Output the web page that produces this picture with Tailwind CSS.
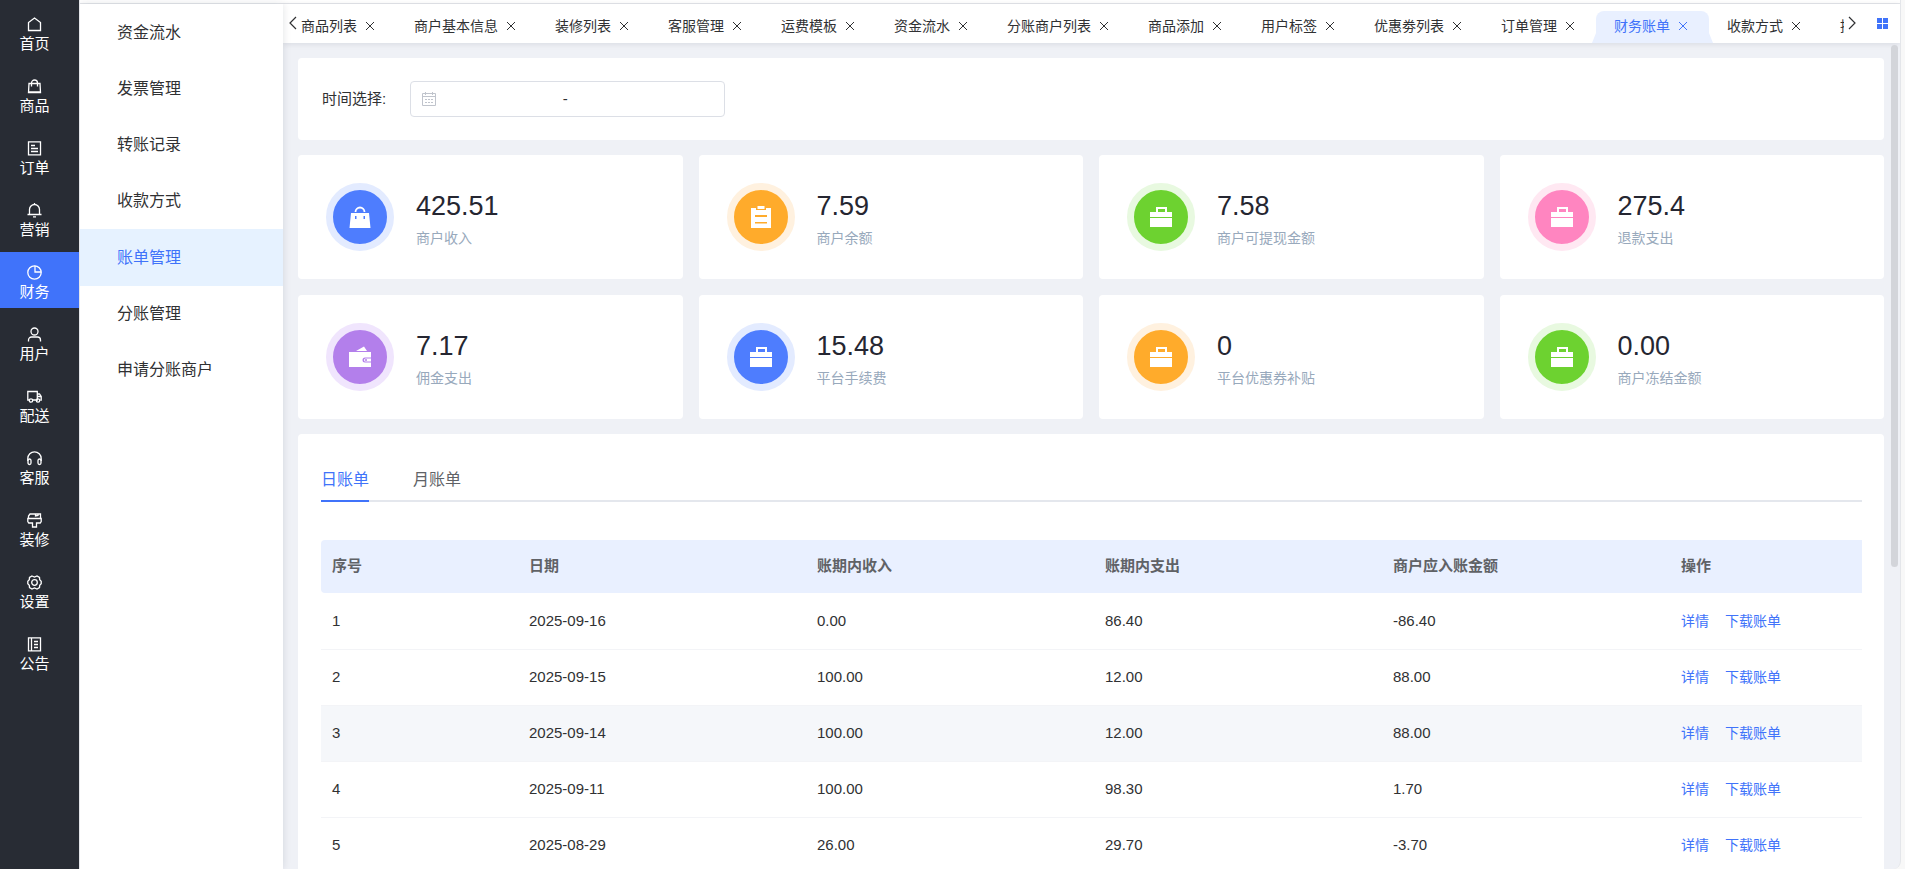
<!DOCTYPE html>
<html lang="zh-CN">
<head>
  <meta charset="UTF-8" />
  <meta name="viewport" content="width=device-width, initial-scale=1.0"/>
  <title>账单管理</title>
  <script src="https://cdn.jsdelivr.net/npm/@tailwindcss/browser@4"></script>
  <style>
    body { font-family: 'Liberation Sans', 'Noto Sans CJK SC', sans-serif; }
  </style>
</head>
<body class="h-screen overflow-hidden bg-[#f8f8f8] text-[#303133]">
  <!-- shared icons -->
  <svg class="hidden">
    <symbol id="close" viewBox="0 0 10 10"><path d="M1 1l8 8M9 1l-8 8" fill="none" stroke="currentColor" stroke-width="1"/></symbol>
    <symbol id="briefcase" viewBox="0 0 22 22">
      <path fill="currentColor" fill-rule="evenodd" d="M6 6V1h11v5h5v5H0V6h6zm2-3v3h7V3H8z"/>
      <path fill="currentColor" d="M0 12h22v9H0z"/>
    </symbol>
  </svg>

  <div class="flex h-full">
    <!-- main menu -->
    <nav class="flex w-[79px] shrink-0 flex-col gap-1.5 bg-[#282c34] pt-1 text-[15px] leading-5 text-white">
      <a href="#" class="flex h-14 flex-col items-center gap-0.5 pt-[13px] pr-2.5">
        <svg class="size-[15px] shrink-0" viewBox="0 0 15 15" fill="none" stroke="currentColor" stroke-width="1.3"><path d="M1.5 13.5v-8l6-4.5 6 4.5v8z"/></svg>首页
      </a>
      <a href="#" class="flex h-14 flex-col items-center gap-0.5 pt-[13px] pr-2.5">
        <svg class="size-[15px] shrink-0" viewBox="0 0 15 15" fill="none" stroke="currentColor" stroke-width="1.3"><path d="M2 4.500h11l.5 9h-12zM4.5 7.5V4a3 3 0 0 1 6 0v3.500M1.500 12.800h12"/></svg>商品
      </a>
      <a href="#" class="flex h-14 flex-col items-center gap-0.5 pt-[13px] pr-2.5">
        <svg class="size-[15px] shrink-0" viewBox="0 0 15 15" fill="none" stroke="currentColor" stroke-width="1.3"><path d="M1.5 .8h12v13h-12zM4 4.500h4M4 7.500h7M4 10.500h7"/></svg>订单
      </a>
      <a href="#" class="flex h-14 flex-col items-center gap-0.5 pt-[13px] pr-2.5">
        <svg class="size-[15px] shrink-0" viewBox="0 0 15 15" fill="none" stroke="currentColor" stroke-width="1.3"><path d="M.5 11.500h14M2.500 11.500V6.500a5 5 0 0 1 10 0v5M6 13.800h3M7.500 0v1.500"/></svg>营销
      </a>
      <a href="#" class="flex h-14 flex-col items-center gap-0.5 bg-[#4073fa] pt-[13px] pr-2.5">
        <svg class="size-[15px] shrink-0" viewBox="0 0 15 15" fill="none" stroke="currentColor" stroke-width="1.3"><circle cx="7.500" cy="7.500" r="6.700"/><path d="M8 .8V7h6.200"/></svg>财务
      </a>
      <a href="#" class="flex h-14 flex-col items-center gap-0.5 pt-[13px] pr-2.5">
        <svg class="size-[15px] shrink-0" viewBox="0 0 15 15" fill="none" stroke="currentColor" stroke-width="1.3"><circle cx="7.500" cy="4.500" r="3.500"/><path d="M1.500 14.500V13a3 3 0 0 1 3-3h6a3 3 0 0 1 3 3v1.500"/></svg>用户
      </a>
      <a href="#" class="flex h-14 flex-col items-center gap-0.5 pt-[13px] pr-2.5">
        <svg class="size-[15px] shrink-0" viewBox="0 0 15 15" fill="none" stroke="currentColor" stroke-width="1.3"><path d="M2.200 11H.8V2.500h9.500v8.500H6M10.300 5h2.200l1.700 2.500V11h-1M10.300 7.500h4"/><circle cx="4" cy="11.500" r="1.700"/><circle cx="11" cy="11.500" r="1.700"/></svg>配送
      </a>
      <a href="#" class="flex h-14 flex-col items-center gap-0.5 pt-[13px] pr-2.5">
        <svg class="size-[15px] shrink-0" viewBox="0 0 15 15" fill="none" stroke="currentColor" stroke-width="1.3"><path d="M.8 10V7.500a6.700 6.700 0 0 1 13.400 0V10"/><rect x="1" y="8" width="3" height="5.500" rx="1.500"/><rect x="11" y="8" width="3" height="5.500" rx="1.500"/></svg>客服
      </a>
      <a href="#" class="flex h-14 flex-col items-center gap-0.5 pt-[13px] pr-2.5">
        <svg class="size-[15px] shrink-0" viewBox="0 0 15 15" fill="none" stroke="currentColor" stroke-width="1.3"><path d="M3 1h10.500v4.500H1.500V3zM8.500 1v2L11 2.500V1M.8 5.500h13.400v3l-1 1.500H9.500v4h-4v-4H1.800l-1-1.500z"/></svg>装修
      </a>
      <a href="#" class="flex h-14 flex-col items-center gap-0.5 pt-[13px] pr-2.5">
        <svg class="size-[15px] shrink-0" viewBox="0 0 15 15" fill="none" stroke="currentColor" stroke-width="1.3"><path d="M5 1l2.500 1L10 1l2.500 1.400.2 2.400 1.500 1.400v2.600l-1.500 1.400-.2 2.400L10 14l-2.500-1L5 14l-2.500-1.400-.2-2.400L.8 8.800V6.200l1.500-1.400.2-2.400z"/><circle cx="7.500" cy="7.500" r="2.800"/></svg>设置
      </a>
      <a href="#" class="flex h-14 flex-col items-center gap-0.5 pt-[13px] pr-2.5">
        <svg class="size-[15px] shrink-0" viewBox="0 0 15 15" fill="none" stroke="currentColor" stroke-width="1.3"><path d="M1.500 .8h12v13h-12zM4.500 .8v13M7 4.500h4M7 7.500h4M7 10.500h4"/></svg>公告
      </a>
    </nav>

    <div class="mr-1 flex min-w-0 flex-1 flex-col overflow-hidden rounded-br-lg border-x border-[#e4e6ea] bg-[#eff1f6]">
      <div class="h-1 shrink-0 border-b border-[#e4e6ea] bg-white"></div>
      <div class="flex min-h-0 flex-1">
        <!-- sub menu -->
        <aside class="z-10 flex w-[203px] shrink-0 flex-col bg-white pt-px text-base shadow-[0_0_8px_rgba(0,21,41,0.12)]">
          <a href="#" class="flex h-14 items-center pl-[37px]">资金流水</a>
          <a href="#" class="flex h-14 items-center pl-[37px]">发票管理</a>
          <a href="#" class="flex h-14 items-center pl-[37px]">转账记录</a>
          <a href="#" class="flex h-14 items-center pl-[37px]">收款方式</a>
          <a href="#" class="flex h-[57px] items-center bg-[#e6f2ff] pl-[37px] text-[#4073fa]">账单管理</a>
          <a href="#" class="flex h-14 items-center pl-[37px]">分账管理</a>
          <a href="#" class="flex h-14 items-center pl-[37px]">申请分账商户</a>
        </aside>

        <div class="flex min-w-0 flex-1 flex-col">
          <!-- opened pages -->
          <header class="flex h-[39px] shrink-0 bg-white shadow-[0_1px_6px_rgba(0,21,41,0.1)]">
            <button type="button" aria-label="向左" class="w-4 shrink-0 pb-3.5 pl-1.5 pt-3">
              <svg class="h-3.5 w-2" viewBox="0 0 8 14" fill="none" stroke="currentColor" stroke-width="1.2"><path d="M7 1L1 7l6 6"/></svg>
            </button>
            <ul class="flex min-w-0 flex-1 items-end overflow-hidden text-sm whitespace-nowrap">
              <li class="flex h-8 shrink-0 items-center gap-2 pb-0.5 pl-0.5 pr-[21px]"><a href="#">商品列表</a><button type="button" aria-label="关闭"><svg class="size-2.5"><use href="#close"/></svg></button></li>
              <li class="flex h-8 shrink-0 items-center gap-2 pb-0.5 pl-[18px] pr-[21px]"><a href="#">商户基本信息</a><button type="button" aria-label="关闭"><svg class="size-2.5"><use href="#close"/></svg></button></li>
              <li class="flex h-8 shrink-0 items-center gap-2 pb-0.5 pl-[18px] pr-[21px]"><a href="#">装修列表</a><button type="button" aria-label="关闭"><svg class="size-2.5"><use href="#close"/></svg></button></li>
              <li class="flex h-8 shrink-0 items-center gap-2 pb-0.5 pl-[18px] pr-[21px]"><a href="#">客服管理</a><button type="button" aria-label="关闭"><svg class="size-2.5"><use href="#close"/></svg></button></li>
              <li class="flex h-8 shrink-0 items-center gap-2 pb-0.5 pl-[18px] pr-[21px]"><a href="#">运费模板</a><button type="button" aria-label="关闭"><svg class="size-2.5"><use href="#close"/></svg></button></li>
              <li class="flex h-8 shrink-0 items-center gap-2 pb-0.5 pl-[18px] pr-[21px]"><a href="#">资金流水</a><button type="button" aria-label="关闭"><svg class="size-2.5"><use href="#close"/></svg></button></li>
              <li class="flex h-8 shrink-0 items-center gap-2 pb-0.5 pl-[18px] pr-[21px]"><a href="#">分账商户列表</a><button type="button" aria-label="关闭"><svg class="size-2.5"><use href="#close"/></svg></button></li>
              <li class="flex h-8 shrink-0 items-center gap-2 pb-0.5 pl-[18px] pr-[21px]"><a href="#">商品添加</a><button type="button" aria-label="关闭"><svg class="size-2.5"><use href="#close"/></svg></button></li>
              <li class="flex h-8 shrink-0 items-center gap-2 pb-0.5 pl-[18px] pr-[21px]"><a href="#">用户标签</a><button type="button" aria-label="关闭"><svg class="size-2.5"><use href="#close"/></svg></button></li>
              <li class="flex h-8 shrink-0 items-center gap-2 pb-0.5 pl-[18px] pr-[21px]"><a href="#">优惠劵列表</a><button type="button" aria-label="关闭"><svg class="size-2.5"><use href="#close"/></svg></button></li>
              <li class="flex h-8 shrink-0 items-center gap-2 pb-0.5 pl-[18px] pr-[21px]"><a href="#">订单管理</a><button type="button" aria-label="关闭"><svg class="size-2.5"><use href="#close"/></svg></button></li>
              <li class="relative flex h-8 shrink-0 items-center gap-2 rounded-t-lg bg-[#e9f0ff] pb-0.5 pl-[18px] pr-[21px] text-[#4073fa] before:absolute before:bottom-0 before:-left-1 before:h-2.5 before:w-1 before:bg-[#e9f0ff] before:[clip-path:polygon(100%_0,100%_100%,0_100%)] after:absolute after:bottom-0 after:-right-1 after:h-2.5 after:w-1 after:bg-[#e9f0ff] after:[clip-path:polygon(0_0,100%_100%,0_100%)]"><a href="#">财务账单</a><button type="button" aria-label="关闭"><svg class="size-2.5"><use href="#close"/></svg></button></li>
              <li class="flex h-8 shrink-0 items-center gap-2 pb-0.5 pl-[18px] pr-[21px]"><a href="#">收款方式</a><button type="button" aria-label="关闭"><svg class="size-2.5"><use href="#close"/></svg></button></li>
              <li class="flex h-8 shrink-0 items-center gap-2 pb-0.5 pl-[18px] pr-[21px]"><a href="#">提现管理</a><button type="button" aria-label="关闭"><svg class="size-2.5"><use href="#close"/></svg></button></li>
            </ul>
            <button type="button" aria-label="向右" class="ml-1 w-2 shrink-0 pb-3.5 pt-3">
              <svg class="h-3.5 w-2" viewBox="0 0 8 14" fill="none" stroke="currentColor" stroke-width="1.2"><path d="M1 1l6 6-6 6"/></svg>
            </button>
            <button type="button" aria-label="更多" class="mx-3 w-5 shrink-0 pb-3.5 pl-[9px] pt-[13px] text-[#4073fa]">
              <svg class="size-[11px]" viewBox="0 0 11 11" fill="currentColor"><path d="M0 0h5v5H0zM6 0h5v5H6zM0 6h5v5H0zM6 6h5v5H6z"/></svg>
            </button>
          </header>

          <main class="relative flex min-h-0 flex-1 flex-col gap-4 overflow-hidden py-[15px] pl-[15px] pr-4">
            <div class="absolute right-0.5 top-0.5 h-[522px] w-[7px] rounded-full bg-[#d3d5da]"></div>

            <section class="-mb-px flex h-[82px] shrink-0 items-center gap-6 rounded bg-white px-6 text-[15px]">
              <label for="start">时间选择:</label>
              <div class="flex h-9 w-[315px] items-center rounded border border-[#dcdfe6] pl-2.5">
                <svg class="size-4 text-[#c0c4cc]" viewBox="0 0 16 16" fill="none" stroke="currentColor"><path d="M1.5 2.500h13v12h-13zM1.500 5.500h13M4.500 1v3M11.500 1v3M4 8.500h2M7 8.500h2M10 8.500h2M4 11.500h2M7 11.500h2M10 11.500h2"/></svg>
                <input id="start" type="text" class="w-[122px] text-center outline-none">
                <span class="w-3 text-center">-</span>
                <input type="text" aria-label="结束日期" class="w-[122px] text-center outline-none">
              </div>
            </section>

            <section class="grid shrink-0 grid-cols-4 gap-4">
              <div class="flex h-[124px] items-center gap-[22px] rounded bg-white pl-7">
                <div class="flex size-[68px] items-center justify-center rounded-full border-[7px] border-[#e3ebff] bg-[#4e7dfe] text-white">
                  <svg class="size-[22px]" viewBox="0 0 22 22"><path fill="currentColor" fill-rule="evenodd" d="M2 7h18l1.500 15H.5zM6 10v3h1.500v-3zM14.500 10v3H16v-3z"/><path fill="none" stroke="currentColor" stroke-width="1.8" d="M6.500 6a4.500 4.500 0 0 1 9 0"/></svg>
                </div>
                <div class="pt-1.5">
                  <p class="text-[27px] leading-9 text-[#252631]">425.51</p>
                  <p class="text-sm leading-7 text-[#98a9bc]">商户收入</p>
                </div>
              </div>
              <div class="flex h-[124px] items-center gap-[22px] rounded bg-white pl-7">
                <div class="flex size-[68px] items-center justify-center rounded-full border-[7px] border-[#fff1df] bg-[#ffab2b] text-white">
                  <svg class="size-[22px]" viewBox="0 0 22 22"><path fill="currentColor" fill-rule="evenodd" d="M1 2h5v2h10V2h5v20H1zM5 9v2h12V9zM5 16v1.500h12V16z"/><path fill="currentColor" d="M7.500 0h7v3h-7z"/></svg>
                </div>
                <div class="pt-1.5">
                  <p class="text-[27px] leading-9 text-[#252631]">7.59</p>
                  <p class="text-sm leading-7 text-[#98a9bc]">商户余额</p>
                </div>
              </div>
              <div class="flex h-[124px] items-center gap-[22px] rounded bg-white pl-7">
                <div class="flex size-[68px] items-center justify-center rounded-full border-[7px] border-[#e8f9e0] bg-[#6dd230] text-white">
                  <svg class="size-[22px]"><use href="#briefcase"/></svg>
                </div>
                <div class="pt-1.5">
                  <p class="text-[27px] leading-9 text-[#252631]">7.58</p>
                  <p class="text-sm leading-7 text-[#98a9bc]">商户可提现金额</p>
                </div>
              </div>
              <div class="flex h-[124px] items-center gap-[22px] rounded bg-white pl-7">
                <div class="flex size-[68px] items-center justify-center rounded-full border-[7px] border-[#ffe8f2] bg-[#ff85c0] text-white">
                  <svg class="size-[22px]"><use href="#briefcase"/></svg>
                </div>
                <div class="pt-1.5">
                  <p class="text-[27px] leading-9 text-[#252631]">275.4</p>
                  <p class="text-sm leading-7 text-[#98a9bc]">退款支出</p>
                </div>
              </div>
              <div class="flex h-[124px] items-center gap-[22px] rounded bg-white pl-7">
                <div class="flex size-[68px] items-center justify-center rounded-full border-[7px] border-[#f0e5fd] bg-[#b37feb] text-white">
                  <svg class="size-[22px]" viewBox="0 0 22 22"><path fill="currentColor" d="M7 5l8-4.500L18 5zM0 6h22v5.500h-6a2.500 2.500 0 0 0 0 5h6V21H0z"/><path fill="currentColor" d="M22 12.500h-5.500a1.500 1.500 0 0 0 0 3H22z"/><circle cx="17" cy="14" r="1" fill="#b37feb"/></svg>
                </div>
                <div class="pt-1.5">
                  <p class="text-[27px] leading-9 text-[#252631]">7.17</p>
                  <p class="text-sm leading-7 text-[#98a9bc]">佣金支出</p>
                </div>
              </div>
              <div class="flex h-[124px] items-center gap-[22px] rounded bg-white pl-7">
                <div class="flex size-[68px] items-center justify-center rounded-full border-[7px] border-[#e3ebff] bg-[#4e7dfe] text-white">
                  <svg class="size-[22px]"><use href="#briefcase"/></svg>
                </div>
                <div class="pt-1.5">
                  <p class="text-[27px] leading-9 text-[#252631]">15.48</p>
                  <p class="text-sm leading-7 text-[#98a9bc]">平台手续费</p>
                </div>
              </div>
              <div class="flex h-[124px] items-center gap-[22px] rounded bg-white pl-7">
                <div class="flex size-[68px] items-center justify-center rounded-full border-[7px] border-[#fff1df] bg-[#ffab2b] text-white">
                  <svg class="size-[22px]"><use href="#briefcase"/></svg>
                </div>
                <div class="pt-1.5">
                  <p class="text-[27px] leading-9 text-[#252631]">0</p>
                  <p class="text-sm leading-7 text-[#98a9bc]">平台优惠券补贴</p>
                </div>
              </div>
              <div class="flex h-[124px] items-center gap-[22px] rounded bg-white pl-7">
                <div class="flex size-[68px] items-center justify-center rounded-full border-[7px] border-[#e8f9e0] bg-[#6dd230] text-white">
                  <svg class="size-[22px]"><use href="#briefcase"/></svg>
                </div>
                <div class="pt-1.5">
                  <p class="text-[27px] leading-9 text-[#252631]">0.00</p>
                  <p class="text-sm leading-7 text-[#98a9bc]">商户冻结金额</p>
                </div>
              </div>
            </section>

            <section class="-mt-px shrink-0 rounded bg-white pl-[23px] pr-[22px] pt-6">
              <div role="tablist" class="flex h-11 gap-11 border-b-2 border-[#e4e7ed] text-base">
                <button type="button" role="tab" aria-selected="true" class="-mb-0.5 border-b-2 border-[#4073fa] pt-0.5 text-[#4073fa]">日账单</button>
                <button type="button" role="tab" aria-selected="false" class="-mb-0.5 border-b-2 border-transparent pt-0.5 text-[#606266]">月账单</button>
              </div>

              <table class="mt-[38px] w-full table-fixed text-left text-[15px]">
                <thead class="text-[#606266]">
                  <tr class="h-[53px] bg-[#e9f0ff]">
                    <th class="w-[197px] rounded-l px-[11px]">序号</th>
                    <th class="px-[11px]">日期</th>
                    <th class="px-[11px]">账期内收入</th>
                    <th class="px-[11px]">账期内支出</th>
                    <th class="px-[11px]">商户应入账金额</th>
                    <th class="w-48 px-[11px]">操作</th>
                  </tr>
                </thead>
                <tbody>
                  <tr class="h-14 border-b border-[#f3f4f7]">
                    <td class="px-[11px]">1</td><td class="px-[11px]">2025-09-16</td><td class="px-[11px]">0.00</td><td class="px-[11px]">86.40</td><td class="px-[11px]">-86.40</td>
                    <td class="px-[11px]"><div class="flex gap-4 text-sm text-[#4073fa]"><a href="#">详情</a><a href="#">下载账单</a></div></td>
                  </tr>
                  <tr class="h-14 border-b border-[#f3f4f7]">
                    <td class="px-[11px]">2</td><td class="px-[11px]">2025-09-15</td><td class="px-[11px]">100.00</td><td class="px-[11px]">12.00</td><td class="px-[11px]">88.00</td>
                    <td class="px-[11px]"><div class="flex gap-4 text-sm text-[#4073fa]"><a href="#">详情</a><a href="#">下载账单</a></div></td>
                  </tr>
                  <tr class="h-14 border-b border-[#f3f4f7] bg-[#f5f7fa]">
                    <td class="px-[11px]">3</td><td class="px-[11px]">2025-09-14</td><td class="px-[11px]">100.00</td><td class="px-[11px]">12.00</td><td class="px-[11px]">88.00</td>
                    <td class="px-[11px]"><div class="flex gap-4 text-sm text-[#4073fa]"><a href="#">详情</a><a href="#">下载账单</a></div></td>
                  </tr>
                  <tr class="h-14 border-b border-[#f3f4f7]">
                    <td class="px-[11px]">4</td><td class="px-[11px]">2025-09-11</td><td class="px-[11px]">100.00</td><td class="px-[11px]">98.30</td><td class="px-[11px]">1.70</td>
                    <td class="px-[11px]"><div class="flex gap-4 text-sm text-[#4073fa]"><a href="#">详情</a><a href="#">下载账单</a></div></td>
                  </tr>
                  <tr class="h-14 border-b border-[#f3f4f7]">
                    <td class="px-[11px]">5</td><td class="px-[11px]">2025-08-29</td><td class="px-[11px]">26.00</td><td class="px-[11px]">29.70</td><td class="px-[11px]">-3.70</td>
                    <td class="px-[11px]"><div class="flex gap-4 text-sm text-[#4073fa]"><a href="#">详情</a><a href="#">下载账单</a></div></td>
                  </tr>
                </tbody>
              </table>
            </section>
          </main>
        </div>
      </div>
    </div>
  </div>
</body>
</html>
